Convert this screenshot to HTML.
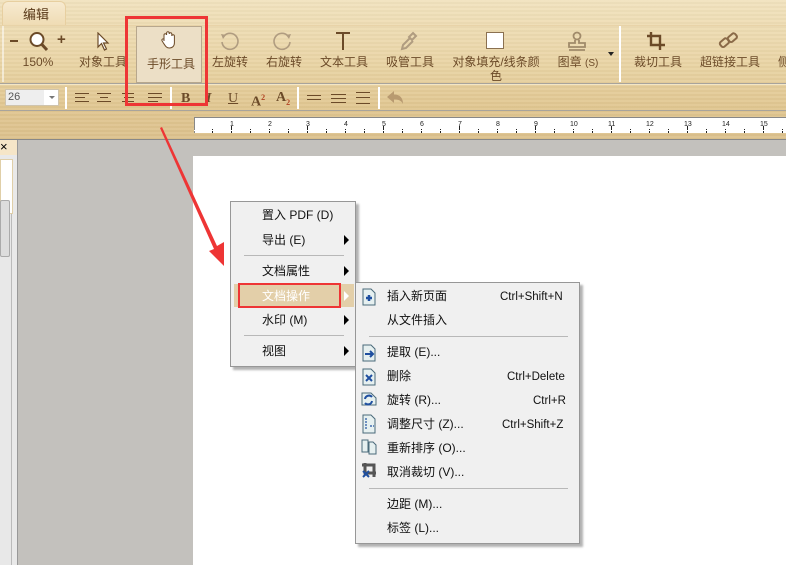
<!DOCTYPE html>
<html><head><meta charset="utf-8"><style>
*{margin:0;padding:0;box-sizing:border-box}
body{width:786px;height:565px;overflow:hidden;position:relative;font-family:"Liberation Sans","Noto Sans CJK SC",sans-serif;background:#c3c1bd}
.a{position:absolute}
.top{left:0;top:0;width:786px;height:140px;background:repeating-linear-gradient(180deg,rgba(255,255,255,.06) 0 2px,rgba(0,0,0,.02) 2px 4px),linear-gradient(180deg,#f1e2be 0,#ead5a6 60px,#e0c690 110px,#dcc18d 140px)}
.tb{font-size:12px;color:#6b4a28;white-space:nowrap}
.lbl{position:absolute;top:55px;font-size:12px;color:#6b4a28;text-align:center;transform:translateX(-50%);white-space:nowrap;line-height:14px}
.mi{position:absolute;font-size:12px;color:#111;white-space:nowrap;line-height:14px}
.sk{position:absolute;font-size:11.5px;color:#111;line-height:14px}
.arr{position:absolute;width:0;height:0;border-top:5px solid transparent;border-bottom:5px solid transparent;border-left:5px solid #000}
</style></head><body>
<div class="a top"></div>
<div class="a" style="left:2px;top:1px;width:64px;height:24px;border:1px solid #e7cfa0;border-bottom:none;border-radius:6px 6px 0 0;background:linear-gradient(#f7ead0,#efdcb4)"></div>
<div class="a tb" style="left:23px;top:4px;font-size:13px;color:#5a3a1a">编辑</div>
<div class="a" style="left:0;top:25px;width:786px;height:1px;background:#e8d3a8"></div>
<div class="a" style="left:2px;top:26px;width:2px;height:56px;background:#fff8"></div>
<div class="a" style="left:10px;top:40px;width:8px;height:2px;background:#6b4a28"></div>
<svg class="a" style="left:28px;top:31px" width="22" height="22"><circle cx="9" cy="8.5" r="6.5" fill="#fff" stroke="#6b4a28" stroke-width="2"/><path d="M13.5 13 L19 19" stroke="#6b4a28" stroke-width="3"/></svg>
<div class="a tb" style="left:57px;top:31px;font-size:15px;font-weight:bold">+</div>
<div class="lbl" style="left:38px">150%</div>
<svg class="a" style="left:96px;top:32px" width="14" height="20"><path d="M2 1 L2 15 L5.5 11.5 L8.5 18 L10.5 17 L7.5 11 L12 11 Z" fill="#fff" stroke="#6b4a28" stroke-width="1.2"/></svg>
<div class="lbl" style="left:103px">对象工具</div>
<div class="a" style="left:136px;top:26px;width:66px;height:57px;background:#ecdfc6;border:1px solid #b7a78d"></div>
<svg class="a" style="left:160px;top:30px" width="18" height="20"><path d="M4 11 V5 a1.3 1.3 0 0 1 2.6 0 V3 a1.3 1.3 0 0 1 2.6 0 V4 a1.3 1.3 0 0 1 2.6 0 V6 a1.3 1.3 0 0 1 2.6 0 V13 c0 3 -2 5 -5 5 c-3 0 -4 -2 -6 -5 l-1.5 -2.5 a1.2 1.2 0 0 1 2 -1.2 Z" fill="#fff" stroke="#6b4a28" stroke-width="1"/></svg>
<div class="lbl" style="left:171px;top:57px">手形工具</div>
<svg class="a" style="left:218px;top:31px" width="22" height="22"><path d="M6 5 A8 8 0 1 1 4 11" fill="none" stroke="#b09c80" stroke-width="1.6"/><path d="M3 3 L8 4 L5 8 Z" fill="#b09c80"/></svg>
<div class="lbl" style="left:230px">左旋转</div>
<svg class="a" style="left:272px;top:31px" width="22" height="22"><path d="M16 5 A8 8 0 1 0 18 11" fill="none" stroke="#b09c80" stroke-width="1.6"/><path d="M19 3 L14 4 L17 8 Z" fill="#b09c80"/></svg>
<div class="lbl" style="left:284px">右旋转</div>
<svg class="a" style="left:334px;top:31px" width="18" height="20"><path d="M2 2 H16 M9 2 V19" stroke="#6b4a28" stroke-width="2"/></svg>
<div class="lbl" style="left:344px">文本工具</div>
<svg class="a" style="left:400px;top:31px" width="18" height="20"><path d="M13 2 l3 3 -4 4 -3 -3 Z M10 7 L3 14 l-1 4 4 -1 7 -7" fill="none" stroke="#b09c80" stroke-width="2"/></svg>
<div class="lbl" style="left:410px">吸管工具</div>
<div class="a" style="left:486px;top:32px;width:18px;height:17px;background:#fff;border:1px solid #8a7050"></div>
<div class="lbl" style="left:496px">对象填充/线条颜<br>色</div>
<svg class="a" style="left:566px;top:31px" width="22" height="20"><circle cx="11" cy="5" r="3.5" fill="none" stroke="#a08a6a" stroke-width="1.8"/><path d="M9 9 V12 H3 V16 H19 V12 H13 V9 M3 19 H19" fill="none" stroke="#a08a6a" stroke-width="1.8"/></svg>
<div class="lbl" style="left:578px">图章 <span style="font-size:10px">(S)</span></div>
<div class="a" style="left:608px;top:52px;border-left:3px solid transparent;border-right:3px solid transparent;border-top:4px solid #222"></div>
<div class="a" style="left:619px;top:26px;width:2px;height:56px;background:#fff"></div>
<svg class="a" style="left:646px;top:31px" width="20" height="20"><path d="M5 1 V14 H19 M1 5 H14 V19" fill="none" stroke="#6b4a28" stroke-width="2.4"/></svg>
<div class="lbl" style="left:658px">裁切工具</div>
<svg class="a" style="left:718px;top:31px" width="22" height="20"><g fill="none" stroke="#8a6a48" stroke-width="2"><rect x="2" y="9" width="9" height="6" rx="2" transform="rotate(-40 6 12)"/><rect x="10" y="4" width="9" height="6" rx="2" transform="rotate(-40 14 7)"/></g></svg>
<div class="lbl" style="left:730px">超链接工具</div>
<div class="lbl" style="left:784px">侧</div>
<div class="a" style="left:0;top:83px;width:786px;height:1px;background:#a8a49c"></div>
<div class="a" style="left:0;top:84px;width:786px;height:1px;background:#f3e6c6"></div>
<div class="a" style="left:5px;top:89px;width:54px;height:17px;background:#fff;border:1px solid #cfc4ae"></div>
<div class="a" style="left:6px;top:90px;width:38px;height:15px;background:#eee"></div>
<div class="a" style="left:8px;top:91px;font-size:11px;color:#555">26</div>
<div class="a" style="left:49px;top:96px;border-left:3px solid transparent;border-right:3px solid transparent;border-top:3px solid #777"></div>
<div class="a" style="left:65px;top:87px;width:2px;height:22px;background:#fff"></div>
<svg class="a" style="left:74px;top:91px" width="90" height="14" stroke="#6b4a28" stroke-width="1"><path d="M1 2.5H15M1 6.5H11M1 10.5H15M23 2.5H37M26 6.5H34M23 10.5H37M48 2.5H60M50 6.5H60M48 10.5H60M74 2.5H88M74 6.5H88M74 10.5H84"/></svg>
<div class="a" style="left:170px;top:87px;width:2px;height:22px;background:#fff"></div>
<div class="a" style="left:181px;top:91px;font:bold 14px 'Liberation Serif',serif;color:#6b4a28">B</div>
<div class="a" style="left:206px;top:91px;font:bold italic 14px 'Liberation Serif',serif;color:#6b4a28">I</div>
<div class="a" style="left:228px;top:91px;font:14px 'Liberation Serif',serif;color:#6b4a28;text-decoration:underline">U</div>
<div class="a" style="left:251px;top:91px;font:bold 14px 'Liberation Serif',serif;color:#6b4a28;line-height:14px">A<sup style="font-size:8px;color:#b04020">2</sup></div>
<div class="a" style="left:276px;top:91px;font:bold 14px 'Liberation Serif',serif;color:#6b4a28;line-height:14px">A<sub style="font-size:8px;color:#b04020">2</sub></div>
<div class="a" style="left:297px;top:87px;width:2px;height:22px;background:#fff"></div>
<svg class="a" style="left:306px;top:91px" width="66" height="14" stroke="#6b4a28" stroke-width="1"><path d="M1 4.5H15M1 8.5H15M25 3.5H40M25 7.5H40M25 11.5H40M50 1.5H64M50 6.5H64M50 12.5H64"/></svg>
<div class="a" style="left:378px;top:87px;width:2px;height:22px;background:#fff"></div>
<svg class="a" style="left:386px;top:90px" width="18" height="16"><path d="M1 7 L8 1 V4.5 C14 4.5 17 8 17 14 C15 10 12 9.5 8 9.5 V13 Z" fill="#b89a70"/></svg>
<div class="a" style="left:0;top:110px;width:786px;height:1px;background:#a8a49c"></div>
<div class="a" style="left:194px;top:117px;width:592px;height:16px;background:#fff;border-top:1px solid #888;border-left:1px solid #888"></div>
<svg class="a" style="left:194px;top:117px" width="592" height="16" font-size="7" fill="#222" font-family="Liberation Sans">
<g stroke="#222" stroke-width="1">
<path d="M18.5 12V16M37.5 9V16M56.5 12V16M75.5 12V16M94.5 12V16M113.5 9V16M132.5 12V16M151.5 12V16M170.5 12V16M189.5 9V16M208.5 12V16M227.5 12V16M246.5 12V16M265.5 9V16M284.5 12V16M303.5 12V16M322.5 12V16M341.5 9V16M360.5 12V16M379.5 12V16M398.5 12V16M417.5 9V16M436.5 12V16M455.5 12V16M474.5 12V16M493.5 9V16M512.5 12V16M531.5 12V16M550.5 12V16M569.5 9V16M588.5 12V16"/>
<path d="M0 13.5H592" stroke="#fff"/></g>
<text x="36" y="9">1</text><text x="74" y="9">2</text><text x="112" y="9">3</text><text x="150" y="9">4</text><text x="188" y="9">5</text><text x="226" y="9">6</text><text x="264" y="9">7</text><text x="302" y="9">8</text><text x="340" y="9">9</text><text x="376" y="9">10</text><text x="414" y="9">11</text><text x="452" y="9">12</text><text x="490" y="9">13</text><text x="528" y="9">14</text><text x="566" y="9">15</text>
</svg>
<div class="a" style="left:0;top:139px;width:786px;height:1px;background:#888"></div>
<div class="a" style="left:0;top:140px;width:18px;height:425px;background:#e9e9e9;border-right:1px solid #999"></div>
<div class="a" style="left:0;top:140px;width:17px;height:15px;background:#f6e6c8"></div>
<div class="a" style="left:0;top:139px;font-size:13px;color:#000">×</div>
<div class="a" style="left:0;top:159px;width:13px;height:55px;background:#fff;border:1px solid #e0cfa8"></div>
<div class="a" style="left:0;top:214px;width:12px;height:351px;background:#e8e8e8;border-right:1px solid #bbb"></div>
<div class="a" style="left:0;top:200px;width:10px;height:57px;background:#ddd;border:1px solid #aaa;border-radius:2px"></div>
<div class="a" style="left:193px;top:156px;width:593px;height:409px;background:#fff"></div>
<div class="a" style="left:230px;top:201px;width:126px;height:166px;background:#f0f0f0;border:1px solid #979797;box-shadow:3px 3px 2px rgba(0,0,0,.3)"></div>
<div class="a" style="left:234px;top:284px;width:120px;height:23px;background:#e3cfa9"></div>
<div class="mi" style="left:262px;top:208px">置入 PDF (D)</div>
<div class="mi" style="left:262px;top:233px">导出 (E)</div><div class="arr" style="left:344px;top:235px"></div>
<div class="a" style="left:244px;top:255px;width:100px;height:1px;background:#b8b8b8"></div>
<div class="mi" style="left:262px;top:264px">文档属性</div><div class="arr" style="left:344px;top:266px"></div>
<div class="mi" style="left:262px;top:289px;color:#fff">文档操作</div><div class="arr" style="left:344px;top:291px;border-left-color:#fff"></div>
<div class="mi" style="left:262px;top:313px">水印 (M)</div><div class="arr" style="left:344px;top:315px"></div>
<div class="a" style="left:244px;top:335px;width:100px;height:1px;background:#b8b8b8"></div>
<div class="mi" style="left:262px;top:344px">视图</div><div class="arr" style="left:344px;top:346px"></div>
<div class="a" style="left:355px;top:282px;width:225px;height:262px;background:#f0f0f0;border:1px solid #979797;box-shadow:3px 3px 2px rgba(0,0,0,.3)"></div>
<svg class="a" style="left:361px;top:287px" width="16" height="250"><g stroke="#4a6a7a" fill="#e6f0f0">
<path d="M2 2H10L14 6V18H2Z"/><path d="M2 58H10L14 62V74H2Z"/><path d="M2 82H10L14 86V98H2Z"/><path d="M1 106H10L15 111V118H1Z"/><path d="M2 128H10L14 132V146H2Z"/><path d="M1 153H7V165H1Z M8 155H12L15 158V167H8Z"/></g>
<path d="M5 11H11M8 8V14" stroke="#1f4fa0" stroke-width="2.5"/>
<path d="M4 67H11M9 64L12 67 9 70" stroke="#1f4fa0" stroke-width="2" fill="none"/>
<path d="M5 88L11 94M11 88L5 94" stroke="#1f4fa0" stroke-width="2"/>
<path d="M4 112A4 4 0 0 1 11 110M11 114A4 4 0 0 1 4 116" stroke="#1f4fa0" stroke-width="2" fill="none"/>
<path d="M5 131V143M9 139H13" stroke="#1f4fa0" stroke-width="1.2" stroke-dasharray="2 1"/>
<path d="M1 178H13V190M4 176V186H15" stroke="#555" stroke-width="3" fill="none"/><path d="M2 184L8 190M8 184L2 190" stroke="#1f4fa0" stroke-width="2"/>
</svg>
<div class="mi" style="left:387px;top:289px">插入新页面</div>
<div class="sk" style="left:500px;top:290px">Ctrl+Shift+N</div>
<div class="mi" style="left:387px;top:313px">从文件插入</div>
<div class="a" style="left:369px;top:336px;width:199px;height:1px;background:#b8b8b8"></div>
<div class="mi" style="left:387px;top:345px">提取 (E)...</div>
<div class="mi" style="left:387px;top:369px">删除</div><div class="sk" style="left:507px;top:370px">Ctrl+Delete</div>
<div class="mi" style="left:387px;top:393px">旋转 (R)...</div><div class="sk" style="left:533px;top:394px">Ctrl+R</div>
<div class="mi" style="left:387px;top:417px">调整尺寸 (Z)...</div><div class="sk" style="left:502px;top:418px">Ctrl+Shift+Z</div>
<div class="mi" style="left:387px;top:441px">重新排序 (O)...</div>
<div class="mi" style="left:387px;top:465px">取消裁切 (V)...</div>
<div class="a" style="left:369px;top:488px;width:199px;height:1px;background:#b8b8b8"></div>
<div class="mi" style="left:387px;top:497px">边距 (M)...</div>
<div class="mi" style="left:387px;top:521px">标签 (L)...</div>
<div class="a" style="left:125px;top:16px;width:83px;height:90px;border:3px solid #ee3535"></div>
<div class="a" style="left:238px;top:283px;width:103px;height:25px;border:2px solid #ee3535"></div>
<svg class="a" style="left:0;top:0" width="786" height="565"><path d="M160 128 L162 127 L217 246 L224 242 L224 266 L209 251 L214 249 Z" fill="#ee3535"/></svg>
</body></html>
